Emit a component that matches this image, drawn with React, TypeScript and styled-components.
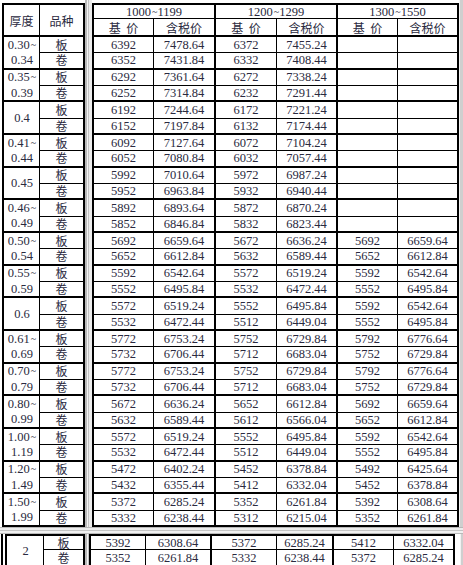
import React from 'react';
import styled, { createGlobalStyle } from 'styled-components';

const GlobalStyle = createGlobalStyle`
  html, body { margin: 0; padding: 0; background: #ffffff; }
  body {
    width: 463px; height: 565px; overflow: hidden;
    font-family: "Liberation Serif", "Noto Sans CJK SC", serif;
    color: #2a2a40;
  }
`;

const Page = styled.div`
  display: flex;
  flex-direction: column;
  width: 463px;
  height: 565px;
  overflow: hidden;
`;

const Pane = styled.div<{ $h: number }>`
  display: flex;
  align-items: stretch;
  height: ${p => p.$h}px;
  flex-shrink: 0;
  overflow: hidden;
`;

const Gutter = styled.div<{ $w: number }>`
  width: ${p => p.$w}px;
  flex-shrink: 0;
`;

const FrameLine = styled.div`
  width: 2px;
  margin: 0 2px 0 1px;
  background: #000;
  flex-shrink: 0;
`;

const VSplit = styled.div<{ $w: number }>`
  width: ${p => p.$w}px;
  flex-shrink: 0;
  background: linear-gradient(to right, #b9b9b9 0 2px, #f4f4f4 2px 3px, #c4c4c4 3px 4px, #ececec 4px);
`;

const HSplit = styled.div`
  height: 7px;
  flex-shrink: 0;
  background: linear-gradient(to bottom, #b9b9b9 0 1px, #ececec 1px 3px, #c4c4c4 3px 4px, #f0f0f0 4px 6px, #b9b9b9 6px);
`;

const RightEdge = styled.div<{ $w: number }>`
  width: ${p => p.$w}px;
  flex-shrink: 0;
  background: linear-gradient(to right, #f2f2f2 0 1px, #cfcfcf 1px);
`;

const Grid = styled.div<{ $cols: string; $rows: string; $top: number }>`
  display: grid;
  grid-template-columns: ${p => p.$cols};
  grid-template-rows: ${p => p.$rows};
  margin-top: ${p => p.$top}px;
  align-self: flex-start;
  border-top: 2px solid #000;
  border-left: 2px solid #000;
  flex-shrink: 0;
`;

const Cell = styled.div<{ $b?: number; $r?: number; $rs?: number; $cs?: number }>`
  box-sizing: border-box;
  grid-row: span ${p => p.$rs ?? 1};
  grid-column: span ${p => p.$cs ?? 1};
  border-bottom: ${p => p.$b ?? 1}px solid #000;
  border-right: ${p => p.$r ?? 1}px solid #000;
  display: flex;
  align-items: center;
  justify-content: center;
  font-size: 12.5px;
  line-height: 12px;
  white-space: nowrap;
  min-height: 0;
`;

const HeadCell = styled(Cell)`
  word-spacing: 3px;
  padding-top: 1px;
`;

const CjkText = styled.span`
  font-family: "Noto Sans CJK SC", sans-serif;
  font-size: 12px;
  line-height: 12px;
  font-weight: 400;
  color: #2a2a40;
`;

const StackCell = styled(Cell)`
  flex-direction: column;
  align-items: stretch;
`;

const StackLine = styled.div`
  flex: 1;
  display: flex;
  align-items: center;
  justify-content: center;
  padding-left: 1px;
`;

const Tilde = styled.span`
  font-size: 0.8em;
  vertical-align: 0.55em;
  margin-left: 1px;
`;

type Group = { label: string[]; rows: [string[], string[]] };

const groups: Group[] = [
  { label: ['0.30~', '0.34'], rows: [['6392', '7478.64', '6372', '7455.24', '', ''], ['6352', '7431.84', '6332', '7408.44', '', '']] },
  { label: ['0.35~', '0.39'], rows: [['6292', '7361.64', '6272', '7338.24', '', ''], ['6252', '7314.84', '6232', '7291.44', '', '']] },
  { label: ['0.4'], rows: [['6192', '7244.64', '6172', '7221.24', '', ''], ['6152', '7197.84', '6132', '7174.44', '', '']] },
  { label: ['0.41~', '0.44'], rows: [['6092', '7127.64', '6072', '7104.24', '', ''], ['6052', '7080.84', '6032', '7057.44', '', '']] },
  { label: ['0.45'], rows: [['5992', '7010.64', '5972', '6987.24', '', ''], ['5952', '6963.84', '5932', '6940.44', '', '']] },
  { label: ['0.46~', '0.49'], rows: [['5892', '6893.64', '5872', '6870.24', '', ''], ['5852', '6846.84', '5832', '6823.44', '', '']] },
  { label: ['0.50~', '0.54'], rows: [['5692', '6659.64', '5672', '6636.24', '5692', '6659.64'], ['5652', '6612.84', '5632', '6589.44', '5652', '6612.84']] },
  { label: ['0.55~', '0.59'], rows: [['5592', '6542.64', '5572', '6519.24', '5592', '6542.64'], ['5552', '6495.84', '5532', '6472.44', '5552', '6495.84']] },
  { label: ['0.6'], rows: [['5572', '6519.24', '5552', '6495.84', '5592', '6542.64'], ['5532', '6472.44', '5512', '6449.04', '5552', '6495.84']] },
  { label: ['0.61~', '0.69'], rows: [['5772', '6753.24', '5752', '6729.84', '5792', '6776.64'], ['5732', '6706.44', '5712', '6683.04', '5752', '6729.84']] },
  { label: ['0.70~', '0.79'], rows: [['5772', '6753.24', '5752', '6729.84', '5792', '6776.64'], ['5732', '6706.44', '5712', '6683.04', '5752', '6729.84']] },
  { label: ['0.80~', '0.99'], rows: [['5672', '6636.24', '5652', '6612.84', '5692', '6659.64'], ['5632', '6589.44', '5612', '6566.04', '5652', '6612.84']] },
  { label: ['1.00~', '1.19'], rows: [['5572', '6519.24', '5552', '6495.84', '5592', '6542.64'], ['5532', '6472.44', '5512', '6449.04', '5552', '6495.84']] },
  { label: ['1.20~', '1.49'], rows: [['5472', '6402.24', '5452', '6378.84', '5492', '6425.64'], ['5432', '6355.44', '5412', '6332.04', '5452', '6378.84']] },
  { label: ['1.50~', '1.99'], rows: [['5372', '6285.24', '5352', '6261.84', '5392', '6308.64'], ['5332', '6238.44', '5312', '6215.04', '5352', '6261.84']] },
];

const bottomGroup: Group = {
  label: ['2'],
  rows: [['5392', '6308.64', '5372', '6285.24', '5412', '6332.04'], ['5352', '6261.84', '5332', '6238.44', '5372', '6285.24']],
};

const withTilde = (text: string) => {
  const parts = text.split('~');
  return parts.map((part, i) => (
    <React.Fragment key={i}>
      {part}
      {i < parts.length - 1 && <Tilde>~</Tilde>}
    </React.Fragment>
  ));
};

const rightBorders = [1, 2, 1, 2, 1, 2];
const kinds = ['板', '卷'];

const LeftCells: React.FC<{ list: Group[]; lastBottom?: number }> = ({ list, lastBottom = 2 }) => (
  <>
    {list.map((g, gi) => {
      const isLast = gi === list.length - 1;
      return (
        <React.Fragment key={gi}>
          <StackCell $rs={2} $b={isLast ? lastBottom : 2} $r={1}>
            {g.label.map((l, li) => (
              <StackLine key={li}>{withTilde(l)}</StackLine>
            ))}
          </StackCell>
          <Cell $b={1} $r={2}><CjkText>{kinds[0]}</CjkText></Cell>
          <Cell $b={isLast ? lastBottom : 2} $r={2}><CjkText>{kinds[1]}</CjkText></Cell>
        </React.Fragment>
      );
    })}
  </>
);

const RightCells: React.FC<{ list: Group[]; lastBottom?: number }> = ({ list, lastBottom = 2 }) => (
  <>
    {list.map((g, gi) =>
      g.rows.map((row, ri) => {
        const isLastRow = gi === list.length - 1 && ri === 1;
        const b = ri === 0 ? 1 : isLastRow ? lastBottom : 2;
        return row.map((v, ci) => (
          <Cell key={`${gi}-${ri}-${ci}`} $b={b} $r={rightBorders[ci]}>
            {v}
          </Cell>
        ));
      })
    )}
  </>
);

const rowsMain = '14px 18px repeat(30, 16.3333px)';
const rowsBottom = '14px 15px';

export default function App() {
  return (
    <>
      <GlobalStyle />
      <Page>
        <Pane $h={527}>
          <Gutter $w={2} />
          <Grid $cols="36px 45px" $rows={rowsMain} $top={3}>
            <HeadCell $rs={2} $b={2} $r={1}><CjkText>厚度</CjkText></HeadCell>
            <HeadCell $rs={2} $b={2} $r={2}><CjkText>品种</CjkText></HeadCell>
            <LeftCells list={groups} />
          </Grid>
          <VSplit $w={7} />
          <Grid $cols="60px 62px 61px 61px 60px 61px" $rows={rowsMain} $top={3}>
            <HeadCell $cs={2} $b={1} $r={2}>{withTilde('1000~1199')}</HeadCell>
            <HeadCell $cs={2} $b={1} $r={2}>{withTilde('1200 ~ 1299')}</HeadCell>
            <HeadCell $cs={2} $b={1} $r={2}>{withTilde('1300 ~ 1550')}</HeadCell>
            {rightBorders.map((r, i) => (
              <HeadCell key={i} $b={2} $r={r}>
                <CjkText>{i % 2 === 0 ? '基 价' : '含税价'}</CjkText>
              </HeadCell>
            ))}
            <RightCells list={groups} />
          </Grid>
          <RightEdge $w={4} />
        </Pane>
        <HSplit />
        <Pane $h={31}>
          <FrameLine />
          <Grid $cols="37px 41px" $rows={rowsBottom} $top={0}>
            <LeftCells list={[bottomGroup]} lastBottom={0} />
          </Grid>
          <VSplit $w={4} />
          <Grid $cols="55px 66px 65px 57px 60px 61px" $rows={rowsBottom} $top={0}>
            <RightCells list={[bottomGroup]} lastBottom={0} />
          </Grid>
          <Gutter $w={5} />
          <RightEdge $w={3} />
        </Pane>
      </Page>
    </>
  );
}
